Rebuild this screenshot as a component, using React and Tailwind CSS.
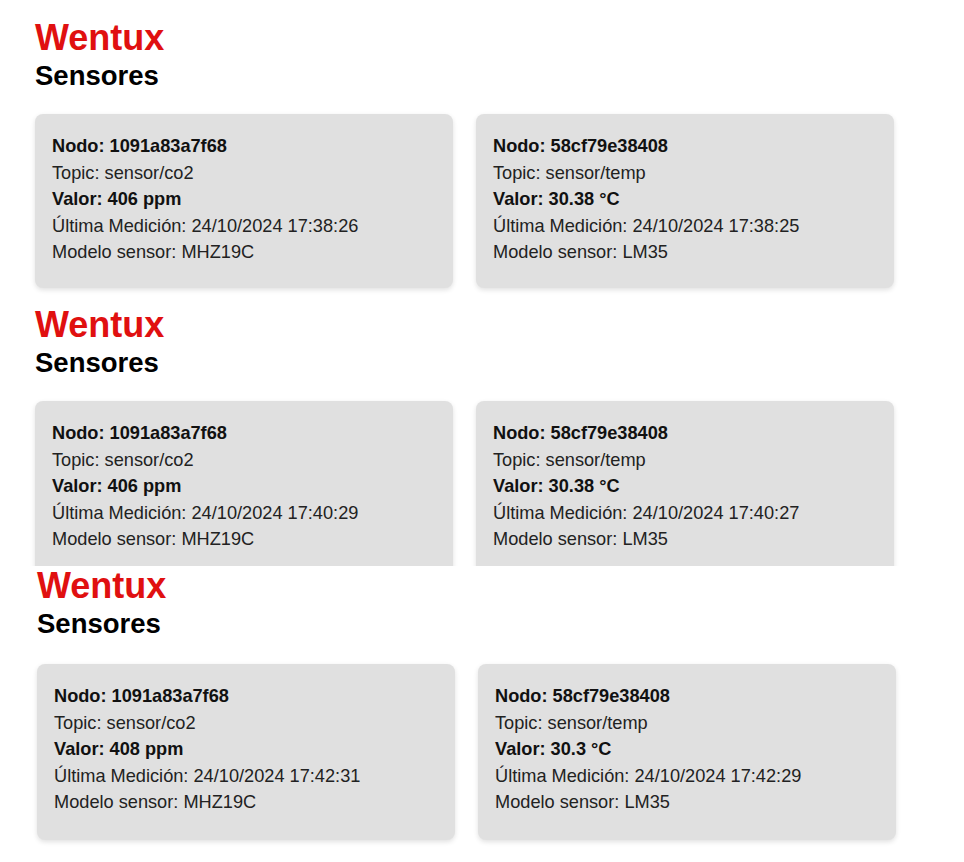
const snapshots = [
  {
    pt: 'pt-[20px]',
    pl: 'pl-[35px]',
    clip: '',
    gap: 'mb-[24.5px]',
    pb: 'pb-[22px]',
    sensors: [
      { nodo: '1091a83a7f68', topic: 'sensor/co2', valor: '406 ppm', fecha: '24/10/2024 17:38:26', modelo: 'MHZ19C' },
      { nodo: '58cf79e38408', topic: 'sensor/temp', valor: '30.38 °C', fecha: '24/10/2024 17:38:25', modelo: 'LM35' },
    ],
  },
  {
    pt: 'pt-[20px]',
    pl: 'pl-[35px]',
    clip: 'h-[279px] overflow-hidden',
    gap: 'mb-[24.5px]',
    pb: 'pb-[22px]',
    sensors: [
      { nodo: '1091a83a7f68', topic: 'sensor/co2', valor: '406 ppm', fecha: '24/10/2024 17:40:29', modelo: 'MHZ19C' },
      { nodo: '58cf79e38408', topic: 'sensor/temp', valor: '30.38 °C', fecha: '24/10/2024 17:40:27', modelo: 'LM35' },
    ],
  },
  {
    pt: 'pt-[2px]',
    pl: 'pl-[37px]',
    clip: '',
    gap: 'mb-[26.5px]',
    pb: 'pb-[24px]',
    sensors: [
      { nodo: '1091a83a7f68', topic: 'sensor/co2', valor: '408 ppm', fecha: '24/10/2024 17:42:31', modelo: 'MHZ19C' },
      { nodo: '58cf79e38408', topic: 'sensor/temp', valor: '30.3 °C', fecha: '24/10/2024 17:42:29', modelo: 'LM35' },
    ],
  },
]

function SensorCard({ sensor, pb }) {
  return (
    <div className={`w-[418px] rounded-lg bg-[#e0e0e0] pt-[19px] px-[17px] ${pb} shadow-[0_2px_5px_rgba(0,0,0,0.12)]`}>
      <p className="font-bold text-[#111]">Nodo: {sensor.nodo}</p>
      <p>Topic: {sensor.topic}</p>
      <p className="font-bold text-[#111]">Valor: {sensor.valor}</p>
      <p>Última Medición: {sensor.fecha}</p>
      <p>Modelo sensor: {sensor.modelo}</p>
    </div>
  )
}

function Snapshot({ snap }) {
  return (
    <section className={`${snap.pt} ${snap.pl} ${snap.clip}`}>
      <h1 className="text-[36px] leading-none font-bold text-[#e01010]">Wentux</h1>
      <h2 className={`mt-[6px] ${snap.gap} text-[27.5px] leading-none font-bold text-black`}>Sensores</h2>
      <div className="flex gap-[23px] text-[18.2px] leading-[26.5px] text-[#222]">
        {snap.sensors.map((s) => (
          <SensorCard key={s.nodo} sensor={s} pb={snap.pb} />
        ))}
      </div>
    </section>
  )
}

export default function App() {
  return (
    <div className="min-h-screen bg-white font-['Liberation_Sans',Arial,sans-serif]">
      <div className="h-[287px]">
        <Snapshot snap={snapshots[0]} />
      </div>
      <Snapshot snap={snapshots[1]} />
      <Snapshot snap={snapshots[2]} />
    </div>
  )
}
